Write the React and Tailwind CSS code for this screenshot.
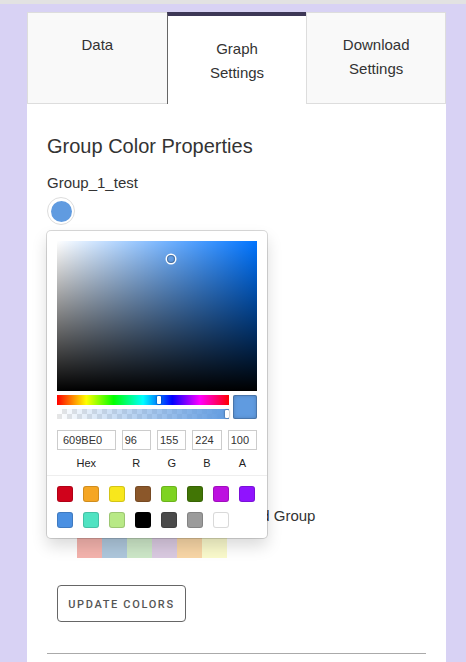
import React from 'react';

const presetColors = [
  '#D0021B', '#F5A623', '#F8E71C', '#8B572A', '#7ED321', '#417505', '#BD10E0', '#9013FE',
  '#4A90E2', '#50E3C2', '#B8E986', '#000000', '#4A4A4A', '#9B9B9B', '#FFFFFF',
];

const paletteCells = ['#f4b3ad', '#aec7dc', '#cde7c8', '#dacae1', '#f8d6a6', '#fafacc'];

const GroupRow = ({ name, color, children }) => (
  <div className="relative mb-3">
    <div className="text-[15px] leading-[20px] text-[#333]">{name}</div>
    <div className="mt-[4px] w-7 h-7 rounded-full border border-[#ddd] bg-white flex items-center justify-center">
      <div className="w-[21px] h-[21px] rounded-full" style={{ backgroundColor: color }} />
    </div>
    {children}
  </div>
);

const Field = ({ value, label, wide }) => (
  <div className={wide ? 'flex-[2]' : 'flex-1 pl-[6px]'}>
    <div className={`h-[20px] text-[11px] leading-[20px] text-[#333] shadow-[inset_0_0_0_1px_#ccc] ${wide ? 'pl-[6px]' : 'pl-[3px]'}`}>
      {value}
    </div>
    <div className="pt-[6px] text-center text-[11px] leading-[14px] text-[#222]">{label}</div>
  </div>
);

const SketchPicker = () => (
  <div className="absolute left-0 top-full mt-[6px] z-10 w-[220px] bg-white rounded-[4px] p-[10px] pb-0 shadow-[0_0_0_1px_rgba(0,0,0,0.15),0_8px_16px_rgba(0,0,0,0.15)]">
    <div className="relative w-[200px] h-[150px] bg-[#0074ff]">
      <div className="absolute inset-0 bg-linear-to-r from-white to-transparent" />
      <div className="absolute inset-0 bg-linear-to-t from-black to-transparent" />
      <div className="absolute left-[110px] top-[14px] w-[8px] h-[8px] rounded-full shadow-[0_0_0_1.5px_#fff,inset_0_0_1px_1px_rgba(0,0,0,0.3)]" />
    </div>
    <div className="flex mt-[4px]">
      <div className="flex-1">
        <div className="relative h-[10px] bg-[linear-gradient(to_right,#f00_0%,#ff0_17%,#0f0_33%,#0ff_50%,#00f_67%,#f0f_83%,#f00_100%)]">
          <div className="absolute left-[100px] top-[1px] w-[4px] h-[8px] bg-white rounded-[1px] shadow-[0_0_2px_rgba(0,0,0,0.6)]" />
        </div>
        <div className="relative mt-[4px] h-[10px] bg-[conic-gradient(#e6e6e6_25%,#fff_0_50%,#e6e6e6_0_75%,#fff_0)] bg-size-[10px_10px]">
          <div className="absolute inset-0 bg-linear-to-r from-transparent to-[#609be0]" />
          <div className="absolute right-[0px] top-[1px] w-[4px] h-[8px] bg-white rounded-[1px] shadow-[0_0_2px_rgba(0,0,0,0.6)]" />
        </div>
      </div>
      <div className="ml-[4px] w-[24px] h-[24px] rounded-[2px] bg-[#609be0] shadow-[inset_0_0_0_1px_rgba(0,0,0,0.15),inset_0_0_4px_rgba(0,0,0,0.25)]" />
    </div>
    <div className="flex mt-[11px]">
      <Field value="609BE0" label="Hex" wide />
      <Field value="96" label="R" />
      <Field value="155" label="G" />
      <Field value="224" label="B" />
      <Field value="100" label="A" />
    </div>
    <div className="mt-[5px] -mx-[10px] border-t border-[#eee] pt-[10px] pl-[10px] flex flex-wrap">
      {presetColors.map((c) => (
        <div
          key={c}
          className="w-[16px] h-[16px] mr-[10px] mb-[10px] rounded-[3px] shadow-[inset_0_0_0_1px_rgba(0,0,0,0.15)]"
          style={{ backgroundColor: c }}
        />
      ))}
    </div>
  </div>
);

export default function App() {
  return (
    <div className="min-h-[662px] bg-[#d8d2f4] font-['Liberation_Sans',Arial,sans-serif]">
      <div className="h-[4px] bg-[#e2e2e2]" />
      <div className="ml-[27px] mt-[8px] w-[419px] bg-white">
        <div className="grid grid-cols-3 h-[92px]">
          <div className="bg-[#f9f9f9] border border-[#ddd] border-r-0 pt-[20px] text-center text-[15px] leading-[24px] text-[#333]">
            Data
          </div>
          <div className="bg-white border-t-4 border-t-[#3d3756] border-l border-l-[#666] pt-[21px] text-center text-[15px] leading-[24px] text-[#333]">
            Graph
            <br />
            Settings
          </div>
          <div className="bg-[#f9f9f9] border border-[#ddd] pt-[20px] text-center text-[15px] leading-[24px] text-[#333]">
            Download
            <br />
            Settings
          </div>
        </div>

        <div className="px-5 pt-[28px] pb-[40px]">
          <h2 className="text-[20px] leading-[28px] text-[#333]">Group Color Properties</h2>
          <div className="mt-[13px]">
            <GroupRow name="Group_1_test" color="#609be0">
              <SketchPicker />
            </GroupRow>
            <GroupRow name="Group_2_test" color="#e07a60" />
            <GroupRow name="Group_3_test" color="#7ec27a" />
          </div>

          <div className="mt-[153px] pl-[40px] text-[15px] leading-[20px] text-[#333]">
            Default Palette for Selected Group
          </div>
          <div className="mt-[12px] ml-[30px] flex">
            {paletteCells.map((c) => (
              <div key={c} className="w-[25px] h-[20px]" style={{ backgroundColor: c }} />
            ))}
          </div>

          <button className="mt-[27px] ml-[10px] h-[37px] w-[129px] pt-[3px] rounded-[4px] border border-[#666] font-['Roboto',sans-serif] text-[11px] font-medium tracking-[0.15em] text-[#555]">
            UPDATE COLORS
          </button>

          <div className="mt-[31px] border-t border-[#aaa]" />
          <div className="h-[40px]" />
        </div>
      </div>
    </div>
  );
}
